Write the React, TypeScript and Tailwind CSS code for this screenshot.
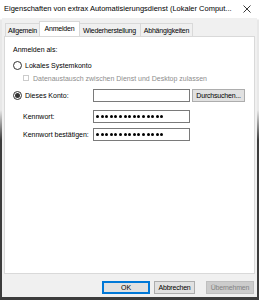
import React from "react";

const F = { fontFamily: '"Liberation Sans", Arial, sans-serif' };

function Radio({ checked }: { checked?: boolean }) {
  return (
    <div className="w-[9px] h-[9px] rounded-full border border-[#333333] bg-white flex items-center justify-center shrink-0">
      {checked && <div className="w-[5px] h-[5px] rounded-full bg-[#333333]" />}
    </div>
  );
}

function Dots() {
  return (
    <div className="h-full flex items-center pl-[2px] gap-[1.6px]">
      {Array.from({ length: 15 }).map((_, i) => (
        <div key={i} className="w-[3px] h-[3px] rounded-full bg-black" />
      ))}
    </div>
  );
}

export default function App() {
  return (
    <div
      className="w-[259px] h-[300px] flex flex-col bg-[linear-gradient(to_bottom,#ffffff_0px,#ffffff_19px,#e8e8e8_20px,#e8e8e8_110px,#3c3c3c_140px,#3c3c3c_300px)] px-[2px] pb-[3px] text-black"
      style={F}
    >
      {/* title bar */}
      <div className="h-[18px] bg-white flex items-center -mx-[2px] pl-[4px] pr-[8px]">
        <div className="flex-1 text-[7.5px] leading-none whitespace-nowrap">
          Eigenschaften von extrax Automatisierungsdienst (Lokaler Comput...
        </div>
        <svg width="8" height="8" viewBox="0 0 8 8" className="shrink-0">
          <path d="M0.5 0.5 L7.5 7.5 M7.5 0.5 L0.5 7.5" stroke="#222" strokeWidth="0.9" />
        </svg>
      </div>
      {/* body */}
      <div className="flex-1 bg-[#f0f0f0] flex flex-col">
        {/* tabs */}
        <div className="h-[18px] flex items-end pl-[3px] pt-[4px]">
          <div className="h-[13px] w-[35px] border border-b-0 border-[#d9d9d9] bg-[#f0f0f0] flex items-center justify-center text-[7px] tracking-[-0.2px] leading-none">
            Allgemein
          </div>
          <div className="h-[15px] w-[41px] -mx-[1px] border border-b-0 border-[#d9d9d9] bg-white flex items-center justify-center text-[7px] tracking-[-0.2px] leading-none relative z-10 pb-[1px]">
            Anmelden
          </div>
          <div className="h-[13px] w-[62px] border border-b-0 border-l-0 border-[#d9d9d9] bg-[#f0f0f0] flex items-center justify-center text-[7px] tracking-[-0.2px] leading-none">
            Wiederherstellung
          </div>
          <div className="h-[13px] w-[52px] border border-b-0 border-l-0 border-[#d9d9d9] bg-[#f0f0f0] flex items-center justify-center text-[7px] tracking-[-0.2px] leading-none">
            Abhängigkeiten
          </div>
        </div>
        {/* panel */}
        <div className="mx-[2px] h-[238px] border border-[#d9d9d9] bg-white flex flex-col pl-[8px] text-[7px] leading-none">
          <div className="h-[9px] mt-[8px] flex items-center">Anmelden als:</div>
          <div className="h-[9px] mt-[7px] flex items-center gap-[3px]">
            <Radio />
            <span>Lokales Systemkonto</span>
          </div>
          <div className="h-[8px] mt-[4px] flex items-center gap-[4px] pl-[10px]">
            <div className="w-[6px] h-[6px] border border-[#cccccc] bg-white" />
            <span className="text-[#8d8d8d]">Datenaustausch zwischen Dienst und Desktop zulassen</span>
          </div>
          <div className="h-[13px] mt-[7px] flex items-center">
            <div className="w-[80px] flex items-center gap-[3px]">
              <Radio checked />
              <span>Dieses Konto:</span>
            </div>
            <div className="w-[97px] h-full border border-[#7a7a7a] bg-white" />
            <div className="ml-[2px] w-[53px] h-full border border-[#adadad] bg-[#e1e1e1] flex items-center justify-center tracking-[-0.2px]">
              Durchsuchen...
            </div>
          </div>
          <div className="h-[13px] mt-[8px] flex items-center">
            <div className="w-[80px] pl-[10px]">Kennwort:</div>
            <div className="w-[97px] h-full border border-[#7a7a7a] bg-white">
              <Dots />
            </div>
          </div>
          <div className="h-[13px] mt-[5px] flex items-center">
            <div className="w-[80px] pl-[10px]">Kennwort bestätigen:</div>
            <div className="w-[97px] h-full border border-[#7a7a7a] bg-white">
              <Dots />
            </div>
          </div>
        </div>
        {/* buttons */}
        <div className="flex-1 flex items-start justify-end pt-[7px] pr-[3px] text-[7px] leading-none">
          <div className="w-[48px] h-[13px] border border-[#0078d7] shadow-[inset_0_0_0_1px_#0078d7] bg-[#e1e1e1] flex items-center justify-center">
            OK
          </div>
          <div className="ml-[4px] w-[41px] h-[13px] border border-[#adadad] bg-[#e1e1e1] flex items-center justify-center tracking-[-0.2px]">
            Abbrechen
          </div>
          <div className="ml-[11px] w-[48px] h-[13px] border border-[#bfbfbf] bg-[#cccccc] text-[#838383] flex items-center justify-center tracking-[-0.2px]">
            Übernehmen
          </div>
        </div>
      </div>
    </div>
  );
}
